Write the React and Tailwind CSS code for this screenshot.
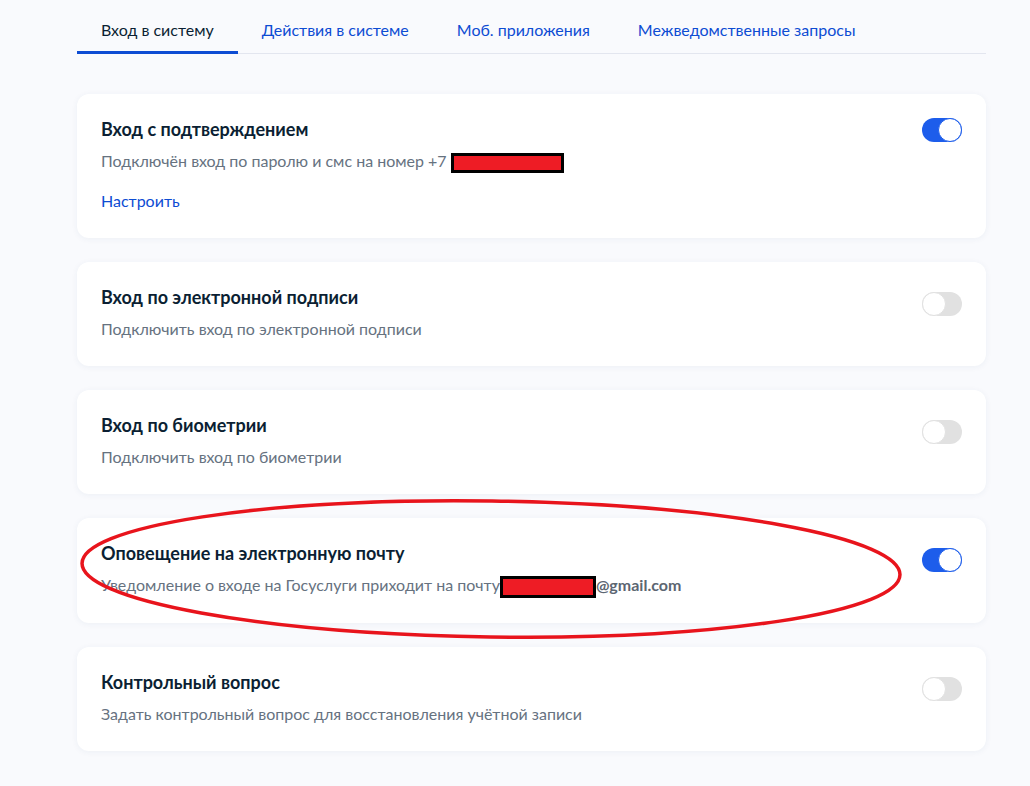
import React from 'react';

const tabs = ['Вход в систему', 'Действия в системе', 'Моб. приложения', 'Межведомственные запросы'];

function Toggle({ on }) {
  return (
    <div
      className={
        'relative w-10 h-6 rounded-full shrink-0 ' + (on ? 'bg-[#1d5deb]' : 'bg-[#e1e1e1]')
      }
    >
      <div
        className={
          'absolute top-0 w-6 h-6 rounded-full bg-white border ' +
          (on ? 'right-0 border-[#1d5deb]' : 'left-0 border-[#e1e1e1]')
        }
      />
    </div>
  );
}

function Redact({ w }) {
  return <span className={'inline-block align-middle bg-[#ee1c25] border-[3px] border-black ' + w} />;
}

function Card({ title, on, children, link }) {
  return (
    <div className="bg-white rounded-xl shadow-[0_1px_6px_rgba(40,60,120,0.06)] px-6 pt-6 pb-[25px] flex justify-between items-start">
      <div>
        <div className="text-[18px] leading-[22px] font-bold text-[#0b1f33]">{title}</div>
        <div className="mt-[9px] text-[16px] leading-6 text-[#66727f]">{children}</div>
        {link && <div className="mt-4 text-[16px] leading-6 text-[#0d4cd3]">{link}</div>}
      </div>
      <div className={link ? '' : 'pt-[6px]'}>
        <Toggle on={on} />
      </div>
    </div>
  );
}

export default function App() {
  return (
    <div className="min-h-screen bg-[#f9fafd] pl-[77px] pr-[44px]" style={{ fontFamily: 'Lato, "Noto Sans", sans-serif' }}>
      <div className="flex border-b border-[#e3e6ef] h-[54px] items-end">
        {tabs.map((t, i) => (
          <div
            key={t}
            className={
              'px-6 pb-[9px] text-[16px] leading-6 border-b-[3px] -mb-px ' +
              (i === 0 ? 'text-[#0b1f33] border-[#0d4cd3]' : 'text-[#0d4cd3] border-transparent')
            }
          >
            {t}
          </div>
        ))}
      </div>

      <div className="relative mt-10 flex flex-col gap-6 pb-9">
        <Card title="Вход с подтверждением" on link="Настроить">
          Подключён вход по паролю и смс на номер +7 <Redact w="w-[113px] h-[20px]" />
        </Card>
        <Card title="Вход по электронной подписи">Подключить вход по электронной подписи</Card>
        <Card title="Вход по биометрии">Подключить вход по биометрии</Card>
        <Card title="Оповещение на электронную почту" on>
          Уведомление о входе на Госуслуги приходит на почту
          <Redact w="w-[96px] h-[22px]" />
          <span className="font-bold text-[#5c6672]">@gmail.com</span>
        </Card>
        <Card title="Контрольный вопрос">Задать контрольный вопрос для восстановления учётной записи</Card>

        <svg
          className="absolute left-[2px] top-[402px] pointer-events-none"
          width="826"
          height="146"
          viewBox="0 0 826 146"
        >
          <ellipse cx="412" cy="73" rx="409" ry="68" fill="none" stroke="#e8141c" strokeWidth="3.5" transform="rotate(0.8 412 73)" />
        </svg>
      </div>
    </div>
  );
}
